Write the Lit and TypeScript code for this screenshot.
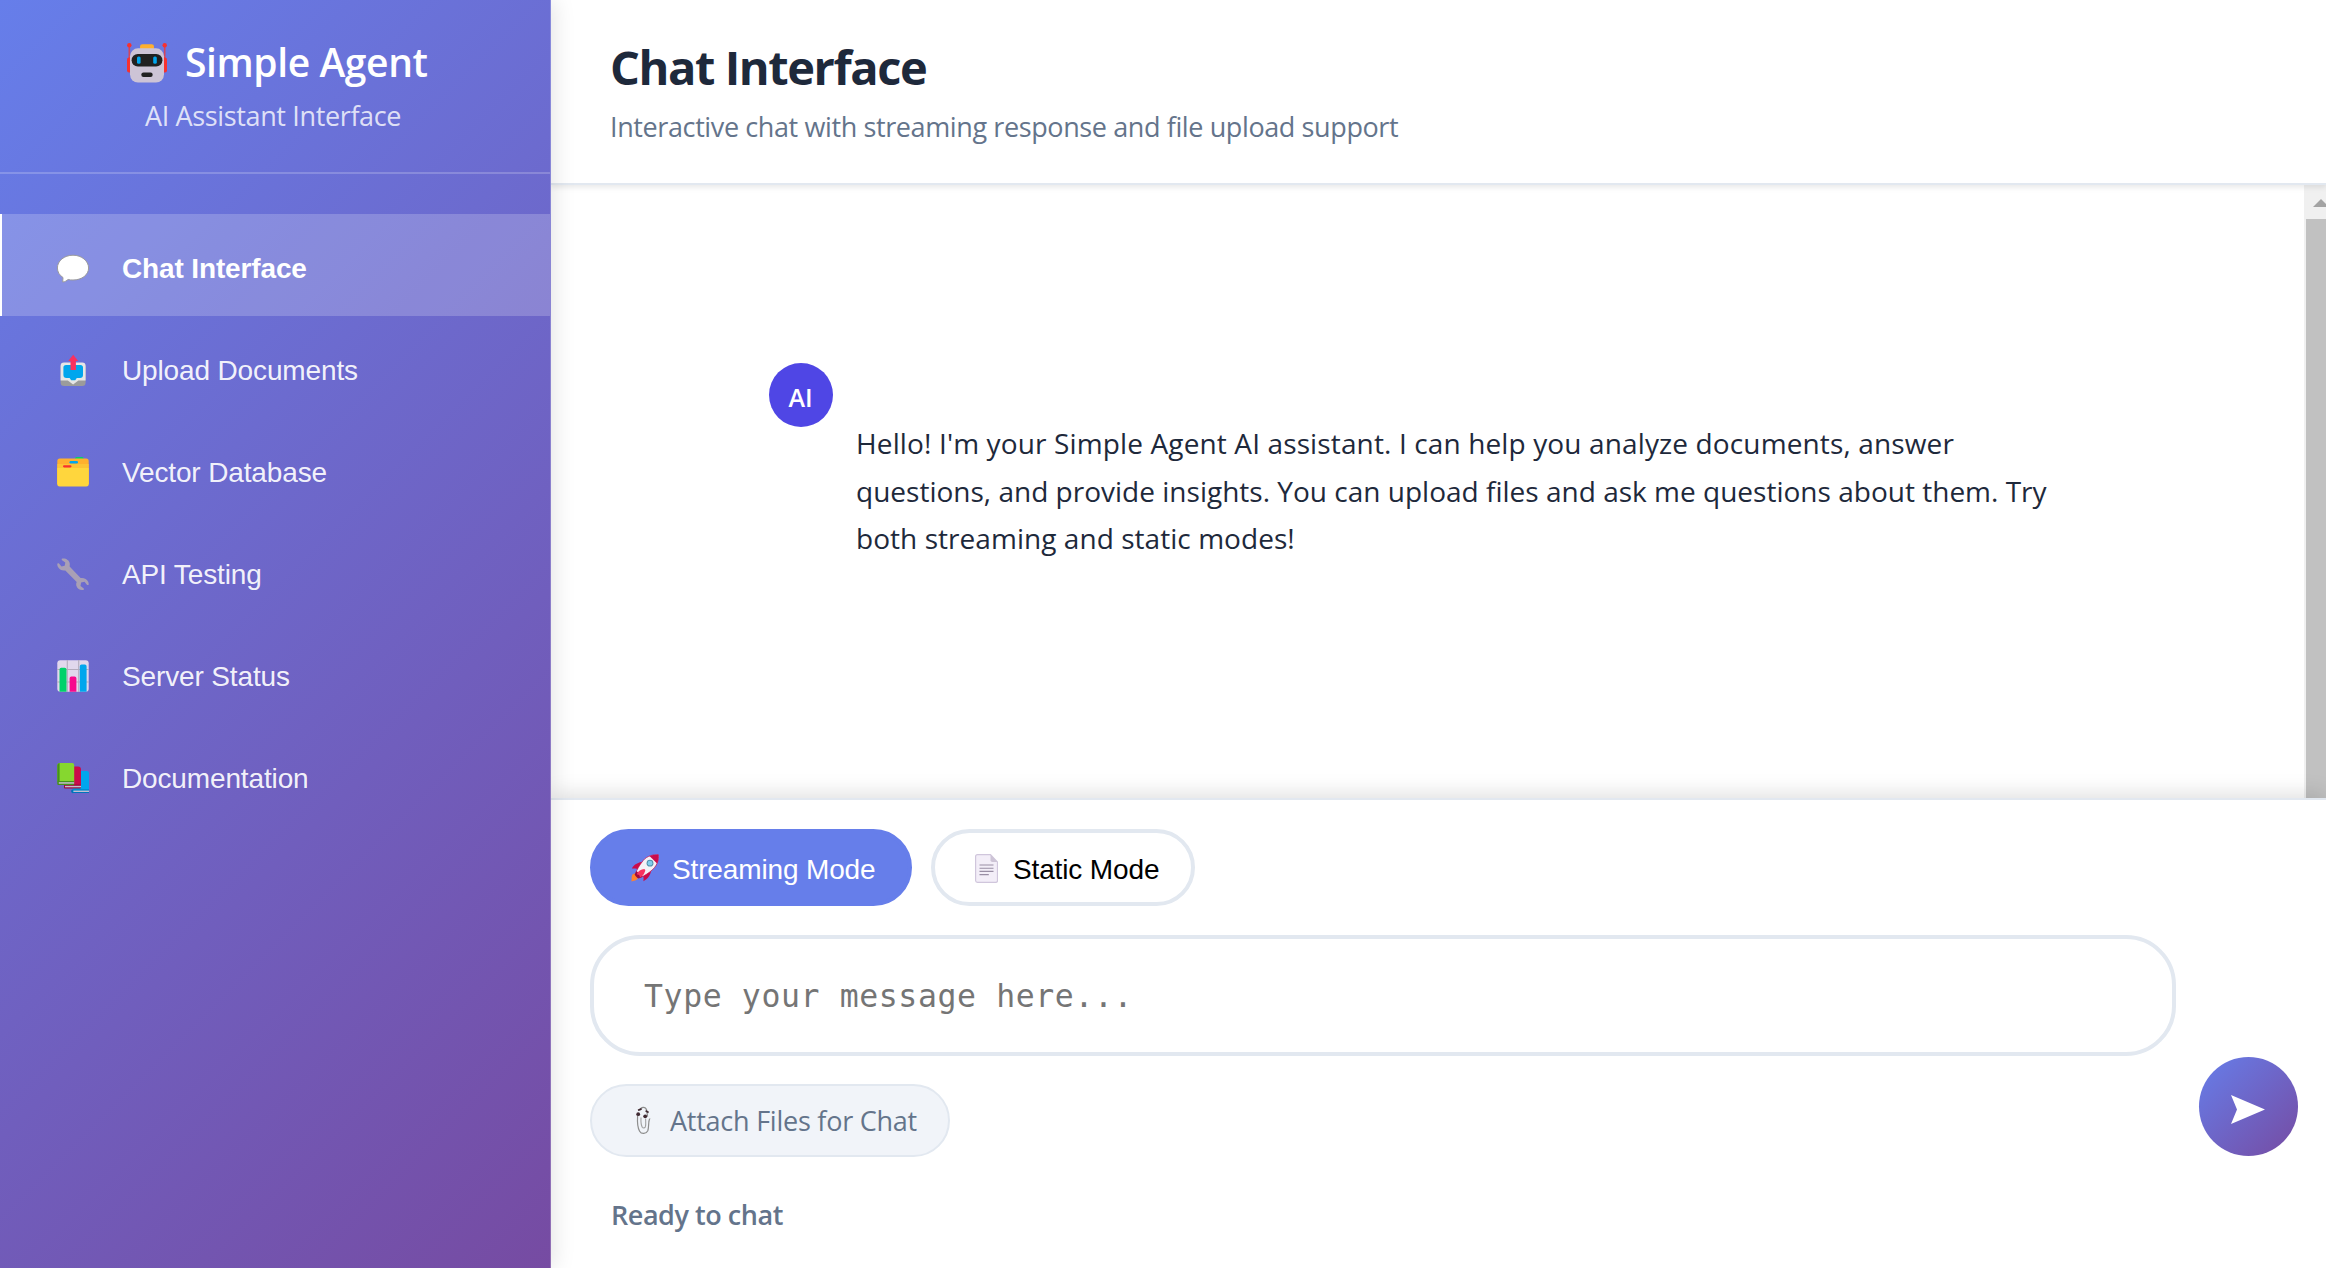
import { LitElement, html, css, svg } from "lit";
import { customElement, state } from "lit/decorators.js";
import { classMap } from "lit/directives/class-map.js";

const robotIcon = html`<svg class="robot" viewBox="0 0 40 40" width="40" height="40">
  <g stroke="#d3455b" stroke-width="1.6"><path d="M2.3 3v14M37.7 3v14" /></g>
  <circle cx="2.3" cy="2.3" r="2.2" fill="#f8312f" /><circle cx="37.7" cy="2.3" r="2.2" fill="#f8312f" />
  <rect x="0" y="14.5" width="6" height="15" rx="2" fill="#f8312f" /><rect x="34" y="14.5" width="6" height="15" rx="2" fill="#f8312f" />
  <rect x="13" y="1.2" width="14" height="6" rx="2.4" fill="#ffb02e" />
  <rect x="3" y="5.3" width="34" height="34.2" rx="8" fill="#cdc4d6" />
  <rect x="4.6" y="11" width="30.8" height="12.5" rx="6.2" fill="#212121" />
  <rect x="10" y="13.6" width="3.6" height="7.2" rx="1.5" fill="#00a6ed" /><rect x="26.2" y="13.6" width="3.6" height="7.2" rx="1.5" fill="#00a6ed" />
  <rect x="14.3" y="29.5" width="11.4" height="4.4" rx="2.2" fill="#212121" />
</svg>`;

const icons = {
  chat: svg`<path d="M16 3.2C7.3 3.200.4 8.800.4 16c0 4 2.200 7.300 5.600 9.500-.1 1.400-.1 3.200-.3 4.500 2.200 0 4-1.400 5.400-2.500 1.500.4 3.200.5 4.900.5 8.700 0 15.600-5 15.600-12S24.700 3.200 16 3.200z" fill="#fff" stroke="#9b9b9b" stroke-width="1" />`,
  upload: svg`
    <rect x="3.600" y="9" width="25" height="23" rx="3.500" fill="#9b9b9b" />
    <path d="M7 8.500h18.200a3.400 3.400 0 0 1 3.400 3.400V26.500h-7.200L16.100 30.500 10.800 26.500H3.600V11.900A3.400 3.400 0 0 1 7 8.500z" fill="#e6e6e6" />
    <path d="M9 11h14.400a2.600 2.600 0 0 1 2.600 2.600v7.400a3 3 0 0 1-3 3h-3.200l-1.600 2.300h-4l-1.600-2.300H9.400a3 3 0 0 1-3-3v-7.400A2.600 2.600 0 0 1 9 11z" fill="#00a6ed" />
    <path d="M16.200.8l5 6.200h-2.300v9h-5.400V7h-2.300z" fill="#f8315f" />`,
  folder: svg`
    <rect x="18" y=".9" width="8.500" height="5" rx="1.500" fill="#00d26a" />
    <rect x=".3" y="2.600" width="31.400" height="27" rx="2.500" fill="#ffb02e" />
    <rect x=".3" y="8" width="31.400" height="20" fill="#fcc335" />
    <rect x="12.500" y="5" width="8.500" height="2.400" rx="1.200" fill="#00a6ed" />
    <rect x="6" y="9.200" width="8.500" height="2.200" rx="1.100" fill="#f8312f" />
    <path d="M.3 12h31.400v16a2.500 2.500 0 0 1-2.500 2.500H2.800A2.500 2.500 0 0 1 .3 28z" fill="#ffd63d" />`,
  wrench: svg`<path d="M4.800.8C8.200-.1 12.300 1.900 12.800 5.800c.1 1-.1 1.900-.2 2.600l11 11.700c2.900-.5 6.400.7 7.700 3.900.4 1 .5 2 .3 2.900l-1.500.2-2.600-3.400-3.400.7-.6 3.500 3.300 2.600.1 1.300c-3.300 1.100-7-1-7.700-4.500-.2-1.200 0-2.300.5-3.300L8.300 12.400c-3.200.5-6.500-1-7.700-4.200-.4-1-.4-2-.2-2.700l1.400-.3 2.700 3.400 3.200-.8.600-3.200L4.700 2z" fill="#a9a0b5" />`,
  chart: svg`
    <rect x=".3" y=".3" width="31.400" height="31.400" rx="3" fill="#e1d8ec" />
    <path d="M10.300 0v32M21.700 0v32M0 9.500h32M0 22h32" stroke="#b4acbc" stroke-width="1.100" />
    <path d="M2.500 31.800V9.500a1.800 1.800 0 0 1 1.800-1.800h3.400a1.800 1.800 0 0 1 1.800 1.800v22.300z" fill="#00d26a" />
    <path d="M12.600 31.800V18.200a1.800 1.800 0 0 1 1.800-1.800h3.200a1.800 1.800 0 0 1 1.800 1.800v13.600z" fill="#f70a8d" />
    <path d="M22.800 31.800V6.200a1.800 1.800 0 0 1 1.800-1.800h3.200a1.800 1.800 0 0 1 1.800 1.800v25.600z" fill="#00a6ed" />`,
  books: svg`
    <path d="M16 27.500V11a2 2 0 0 1 2-2h12a2 2 0 0 1 2 2v19H15z" fill="#00a6ed" /><path d="M15.500 27.400H32v1.200H16v1.300h16v1.200H16.500a1.900 1.900 0 0 1-1-3.700z" fill="#0074ba" /><path d="M16.500 28.600H32v1.400H16.500z" fill="#c5bcd0" />
    <path d="M8 23V6.500a2 2 0 0 1 2-2h11a3 3 0 0 1 3 3v17.100H8z" fill="#ca0b4a" /><rect x="7" y="22.600" width="17" height="3.800" rx="1" fill="#990838" /><rect x="8" y="23.800" width="16" height="1.500" fill="#c5bcd0" />
    <path d="M.3 20V3.600A2.500 2.500 0 0 1 2.800 1.100h12.400a2 2 0 0 1 2 2v17H.3z" fill="#86d72f" /><path d="M.3 20V3.600A2.500 2.500 0 0 1 2.600 1.100V19z" fill="#44911b" /><rect x=".3" y="19" width="16.900" height="3.900" rx="1" fill="#44911b" /><rect x="1.800" y="20.200" width="15.400" height="1.500" fill="#c5bcd0" />`,
};

const rocketIcon = html`<svg class="rocket" viewBox="0 0 28 28" width="28" height="28">
  <path d="M1.500 20.500c1.500-1.600 4.500-1.300 5.400.4.900 1.800-.3 4.200-1.700 5.200-1.300 1-3.100.5-4.700 1.700.300-2.400-.300-5.700 1-7.300z" fill="#ff822d" />
  <path d="M12.200 7.800C8 8 2.700 10.400.9 14.600c2.600-.5 5 0 6.900 1zM20.200 15.800c0 4.300-3.600 9.600-7.800 11.400.500-2.700 0-5-1-6.900z" fill="#ca0b4a" />
  <path d="M27.300.7C22.500.4 16 1.800 12.200 6.500 8.500 11 5.600 16 4.600 19.500l4.400 4.200c3.800-1.500 9-4.700 12.900-8.400C26.500 10.800 28 5.500 27.300.7z" fill="#f4f1f6" stroke="#ca0b4a" stroke-width=".7" />
  <path d="M27.300.7c-2.800-.2-5.900.2-8.800 1.300l7.600 7.600c1.100-2.900 1.500-6.100 1.200-8.900z" fill="#ca0b4a" />
  <path d="M5.500 17l-1.900 3.400c1 2 2.300 3.300 4.200 4.200l3.800-1.900z" fill="#9e0b3c" />
  <path d="M13.300 15c-3 .2-6.600 2.200-7.400 5.500 2.200-.3 3 .7 2.900 2.900 3.200-.9 5-4.400 5.500-7.400z" fill="#f8315f" />
  <circle cx="19" cy="9.200" r="3.400" fill="#5092ad" /><circle cx="19" cy="9.200" r="2.400" fill="#83cbeb" />
</svg>`;

const pageIcon = html`<svg class="page" viewBox="0 0 23 29" width="23" height="29">
  <path d="M2.500.6h13l7 7.500V26.500a1.900 1.900 0 0 1-1.900 1.900H2.500A1.900 1.900 0 0 1 .6 26.500V2.500A1.900 1.900 0 0 1 2.500.6z" fill="#f3eef8" stroke="#d0c6dc" stroke-width="1.200" />
  <path d="M15.500.6l7 7.500h-5.200a1.800 1.800 0 0 1-1.800-1.800z" fill="#cdc4d6" />
  <path d="M4.500 11h14M4.500 14.200h14M4.500 17.400h14M4.500 20.600h9.300" stroke="#998ea4" stroke-width="1.100" />
</svg>`;

const clipIcon = html`<svg class="clip" viewBox="0 0 15 29" width="15" height="29">
  <path d="M3.500 4.500C5 .5 9.500.3 10.600 4l1 6.500M1.600 10c-.4 6 .2 12 2 15.200 1.800 3.200 6.600 2.900 8.200-.4 1-2.800.6-6.500 1.200-9.600.1-1.600.8-2.400 1.200-2.300" fill="none" stroke="#8d8d8d" stroke-width="1.200" />
  <path d="M5 11.500c-.2 4 .2 8 1.300 9.800.9 1 2.600.8 3.100-.6.600-2 .300-5 .200-8" fill="none" stroke="#a2a2a2" stroke-width="1.100" />
  <circle cx="2.200" cy="8.200" r="1.900" fill="#402a32" /><circle cx="9.200" cy="10.300" r="1.900" fill="#402a32" />
  <path d="M2 4.200l3.600-1.300M9.600 4.800l3 1.600" stroke="#402a32" stroke-width="1.700" />
</svg>`;

const navItems: { label: string; icon: keyof typeof icons }[] = [
  { label: "Chat Interface", icon: "chat" },
  { label: "Upload Documents", icon: "upload" },
  { label: "Vector Database", icon: "folder" },
  { label: "API Testing", icon: "wrench" },
  { label: "Server Status", icon: "chart" },
  { label: "Documentation", icon: "books" },
];

@customElement("agent-sidebar")
export class AgentSidebar extends LitElement {
  @state() private active = 0;

  static styles = css`
    :host {
      display: flex;
      flex-direction: column;
      box-sizing: border-box;
      width: 551px;
      flex: none;
      position: relative;
      z-index: 5;
      color: #fff;
      background: linear-gradient(135deg, #667eea 0%, #764ba2 100%) border-box;
      border-right: 1px solid rgba(255, 255, 255, 0.2);
      box-shadow: 4px 0 20px rgba(0, 0, 0, 0.1);
      font-family: "Open Sans", "Noto Sans", sans-serif;
    }
    .brand { box-sizing: border-box; height: 174px; padding-top: 34px; border-bottom: 2px solid rgba(255, 255, 255, 0.2); }
    .title { display: flex; align-items: center; padding-left: 127px; gap: 18px; height: 56px; font-size: 39px; font-weight: 600; line-height: 56px; white-space: nowrap; letter-spacing: -0.4px; }
    .robot { margin-top: 1px; }
    .tagline { margin-top: 6px; padding-left: 145px; font-size: 27px; line-height: 40px; white-space: nowrap; color: rgba(255, 255, 255, 0.8); letter-spacing: -0.36px; }
    .nav { padding-top: 40px; }
    .item {
      display: flex; align-items: center; gap: 33px; box-sizing: border-box; width: 100%; height: 102px;
      padding: 8px 0 0 55px; border: 0; border-left: 2px solid transparent; background: none;
      color: rgba(255, 255, 255, 0.93); font: 28px/40px "Liberation Sans", Arial, sans-serif; text-align: left; white-space: nowrap; letter-spacing: -0.14px;
    }
    .item svg { margin-top: -3px; flex: none; overflow: visible; }
    .active { background: rgba(255, 255, 255, 0.2); border-left-color: #fff; color: #fff; font-weight: 700; }
  `;

  render() {
    return html`
      <div class="brand">
        <div class="title">${robotIcon}<span>Simple Agent</span></div>
        <div class="tagline">AI Assistant Interface</div>
      </div>
      <nav class="nav">
        ${navItems.map(
          (item, i) => html`<button class=${classMap({ item: true, active: i === this.active })} @click=${() => (this.active = i)}>
            <svg viewBox="0 0 32 32" width="32" height="32">${icons[item.icon]}</svg><span>${item.label}</span>
          </button>`,
        )}
      </nav>
    `;
  }
}

@customElement("message-list")
export class MessageList extends LitElement {
  static styles = css`
    :host { display: flex; flex: 1; min-height: 0; background: #fff; font-family: "Open Sans", "Noto Sans", sans-serif; }
    .messages { flex: 1; padding: 178px 0 0 217.500px; }
    .message { display: flex; gap: 23.500px; align-items: flex-start; }
    .avatar { box-sizing: border-box; width: 64px; height: 64px; padding-top: 2px; border-radius: 50%; background: #4f46e5; color: #fff; font-size: 25px; font-weight: 600; line-height: 64px; text-align: center; }
    .text { margin: 57px 0 0; color: #1e293b; font-size: 28px; line-height: 47.6px; white-space: nowrap; }
    .line { display: block; letter-spacing: 0.05px; }
    .wide { letter-spacing: 0.13px; }
    .snug { letter-spacing: 0.01px; }
    .scrollbar { width: 22px; box-sizing: border-box; padding-left: 2px; background: #f0f0f0; overflow: hidden; display: flex; flex-direction: column; }
    .up { display: block; flex: none; margin-left: 7px; height: 34px; }
    .thumb { flex: 1; background: #c1c1c1; }
  `;

  render() {
    return html`
      <div class="messages">
        <div class="message">
          <div class="avatar">AI</div>
          <p class="text">
            <span class="line wide">Hello! I'm your Simple Agent AI assistant. I can help you analyze documents, answer</span>
            <span class="line snug">questions, and provide insights. You can upload files and ask me questions about them. Try</span>
            <span class="line">both streaming and static modes!</span>
          </p>
        </div>
      </div>
      <div class="scrollbar">
        <svg class="up" viewBox="0 0 16 34" width="16" height="34"><path d="M0 22l8-8 8 8z" fill="#a3a3a3" /></svg>
        <div class="thumb"></div>
      </div>
    `;
  }
}

@customElement("chat-composer")
export class ChatComposer extends LitElement {
  @state() private streaming = true;

  static styles = css`
    :host {
      display: block; box-sizing: border-box; flex: none; height: 470px; padding: 29px 27px 0 39px; position: relative;
      border-top: 2px solid #e2e8f0; background: #fff; box-shadow: 0 -4px 20px rgba(0, 0, 0, 0.13);
      font-family: "Open Sans", "Noto Sans", sans-serif;
    }
    .modes { display: flex; gap: 19px; margin-bottom: 29px; }
    .mode {
      display: flex; align-items: center; box-sizing: border-box; height: 77px; padding: 4px 0 0 37px;
      border: 4px solid #e2e8f0; border-radius: 40px; background: #fff; color: #000;
      font: 28px/40px "Liberation Sans", Arial, sans-serif; white-space: nowrap; letter-spacing: -0.14px;
    }
    .stream { width: 322px; gap: 13px; }
    .static { width: 264px; padding-left: 40px; gap: 15px; }
    .selected { background: #667eea; border-color: #667eea; color: #fff; }
    .rocket, .page { margin-top: -3px; flex: none; }
    .row { display: flex; align-items: flex-end; gap: 23px; }
    .fields { flex: 1; display: flex; flex-direction: column; align-items: flex-start; gap: 28px; }
    .input {
      display: block; box-sizing: border-box; width: 100%; height: 121px; padding: 36px 50px 0; margin: 0;
      border: 4px solid #e2e8f0; border-radius: 50px; background: #fff; resize: none; outline: none; overflow: hidden;
      font: 31.500px/42px "DejaVu Sans Mono", monospace; letter-spacing: 0.6px;
    }
    .input::placeholder { color: #757575; opacity: 1; }
    .attach {
      display: flex; align-items: center; box-sizing: border-box; width: 360px; height: 73px; padding: 1px 0 0 44px; gap: 19px;
      border: 2px solid #e2e8f0; border-radius: 37px; background: #f1f4f9; color: #64748b;
      font-size: 27px; line-height: 40px; white-space: nowrap; letter-spacing: -0.24px;
    }
    .clip { flex: none; margin-top: -1px; }
    .send { display: flex; align-items: center; justify-content: center; width: 99px; height: 99px; margin: 0 1px 1px 0; padding: 5px 1px 0 0; border: 0; border-radius: 50%; background: linear-gradient(135deg, #667eea, #764ba2); }
    .status { margin: 38px 0 0 21px; color: #64748b; font-size: 27px; font-weight: 600; line-height: 40px; letter-spacing: -0.45px; }
  `;

  render() {
    return html`
      <div class="modes">
        <button class=${classMap({ mode: true, stream: true, selected: this.streaming })} @click=${() => (this.streaming = true)}>
          ${rocketIcon}<span>Streaming Mode</span>
        </button>
        <button class=${classMap({ mode: true, static: true, selected: !this.streaming })} @click=${() => (this.streaming = false)}>
          ${pageIcon}<span>Static Mode</span>
        </button>
      </div>
      <div class="row">
        <div class="fields">
          <textarea class="input" placeholder="Type your message here..."></textarea>
          <label class="attach">${clipIcon}<span>Attach Files for Chat</span></label>
        </div>
        <button class="send" aria-label="Send">
          <svg viewBox="0 0 34 29" width="34" height="29"><path d="M0 0l34 14.500L0 29l6-14.500z" fill="#fff" /></svg>
        </button>
      </div>
      <div class="status">Ready to chat</div>
    `;
  }
}

@customElement("app-root")
export class AppRoot extends LitElement {
  static styles = css`
    :host { display: flex; width: 2326px; height: 1268px; overflow: hidden; background: #fff; font-family: "Open Sans", "Noto Sans", sans-serif; }
    .main { flex: 1; min-width: 0; display: flex; flex-direction: column; }
    .header { box-sizing: border-box; flex: none; height: 185px; padding: 35px 0 0 59px; position: relative; z-index: 1; background: #fff; border-bottom: 2px solid #e2e8f0; box-shadow: 0 2px 6px rgba(0, 0, 0, 0.1); }
    .heading { margin: 0; color: #1e293b; font-size: 47px; font-weight: 700; line-height: 64px; white-space: nowrap; letter-spacing: -1.43px; }
    .sub { margin: 8px 0 0; color: #64748b; font-size: 27px; line-height: 40px; white-space: nowrap; letter-spacing: -0.39px; }
  `;

  render() {
    return html`
      <agent-sidebar></agent-sidebar>
      <main class="main">
        <header class="header">
          <h1 class="heading">Chat Interface</h1>
          <p class="sub">Interactive chat with streaming response and file upload support</p>
        </header>
        <message-list></message-list>
        <chat-composer></chat-composer>
      </main>
    `;
  }
}
